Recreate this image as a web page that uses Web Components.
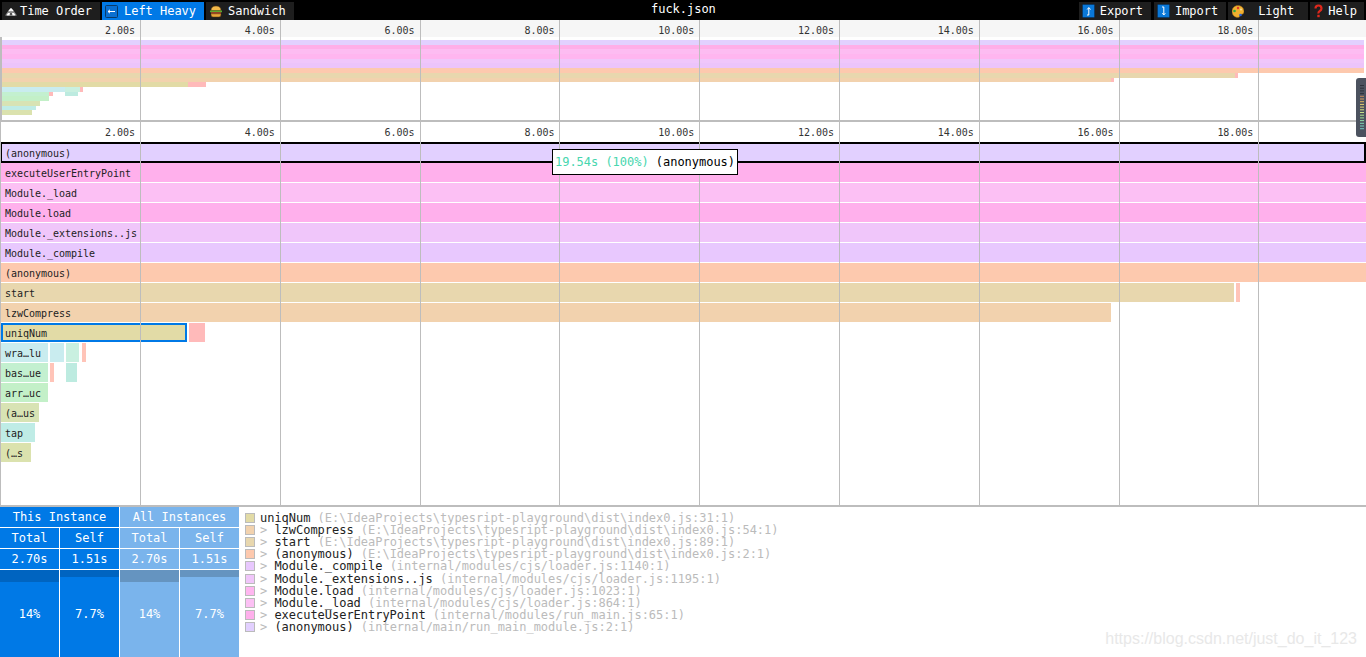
<!DOCTYPE html>
<html>
<head>
<meta charset="utf-8">
<title>fuck.json</title>
<style>
html, body { margin: 0; height: 100%; overflow: hidden; background: #fff; }
body { font: 12px "DejaVu Sans Mono", monospace; letter-spacing: -0.024px; }
</style>
</head>
<body>
<sc-app></sc-app>
<script>
const ICONS = {
    mountain: `<svg width="12" height="10" viewBox="0 0 12 10"><path d="M0 9.500L3.500 4.500 6 2l2.500 2.500L12 9.500z" fill="#8a8a8a"/><path d="M3.500 4.500L6 2l2.500 2.500L7 5.500 6 4.500 5 5.500z" fill="#fff"/><path d="M1.500 9.500L3 7h6l1.500 2.500z" fill="#fff"/><path d="M4.500 9.500L5 7h2l.5 2.500z" fill="#555"/></svg>`,
    left: `<svg width="13" height="13" viewBox="0 0 13 13"><rect x=".5" y=".5" width="12" height="12" rx="1" fill="#0a6fd0" stroke="#0a3a68"/><path d="M3 6.500h7M3 6.500l2-1.700M3 6.500l2 1.700" stroke="#fff" fill="none"/></svg>`,
    sandwich: `<svg width="12" height="13" viewBox="0 0 12 13"><path d="M1 5.500Q1 1 6 1t5 4.500z" fill="#f2b84a" stroke="#5a3a10" stroke-width=".5"/><path d="M0 5.500h12v1.800H0z" fill="#5fa82e"/><path d="M1 7.300h10v1.500H1z" fill="#c0402a"/><path d="M1 8.800h10v1q0 2.200-2 2.200H3q-2 0-2-2.200z" fill="#e9a63a" stroke="#5a3a10" stroke-width=".5"/></svg>`,
    up: `<svg width="13" height="14" viewBox="0 0 13 14"><rect x=".5" y=".5" width="12" height="13" rx="1" fill="#0a78d8" stroke="#0a3a68"/><path d="M5 11h1.800V4M6.800 3.500L5.200 5.500M6.800 3.500l1.700 2" stroke="#fff" fill="none"/></svg>`,
    down: `<svg width="13" height="14" viewBox="0 0 13 14"><rect x=".5" y=".5" width="12" height="13" rx="1" fill="#0a78d8" stroke="#0a3a68"/><path d="M5 3h1.800v7.500M6.800 11L5.400 9.200M6.800 11l1.500-1.800" stroke="#fff" fill="none"/></svg>`,
    palette: `<svg width="12" height="13" viewBox="0 0 12 13"><path d="M6 .5C2.500.5 0 3 0 6.500S2.500 12.500 6 12.500c2 0 1.500-1.500 2-2.500s4 0 4-3.500S9.500.5 6 .5z" fill="#f0b030" stroke="#8a5a14" stroke-width=".5"/><circle cx="6" cy="3" r="1.200" fill="#e03a2a"/><circle cx="2.500" cy="6" r="1.300" fill="#2fa83f"/><circle cx="9" cy="4.500" r="1" fill="#f6e0a0"/><circle cx="8.500" cy="10" r="1.300" fill="#2a62d8"/></svg>`,
    help: `<svg width="9" height="14" viewBox="0 0 9 14"><path d="M1.500 4.500Q1.500 1.500 4.500 1.500T7.500 4.500Q7.500 6 5.800 7T4.500 9.500" fill="none" stroke="#e0281c" stroke-width="2.200"/><rect x="3.300" y="10.800" width="2.400" height="2.400" fill="#e0281c"/></svg>`
}

const GRID_LABELS = ['2.00s', '4.00s', '6.00s', '8.00s', '10.00s', '12.00s', '14.00s', '16.00s', '18.00s', '']

const ROWS = [
    { c: '#e2d0ff', bars: [[0, 1366, '(anonymous)']] },
    { c: '#ffb0ec', bars: [[1, 1365, 'executeUserEntryPoint']] },
    { c: '#fcc0f4', bars: [[1, 1365, 'Module._load']] },
    { c: '#ffb0ec', bars: [[1, 1365, 'Module.load']] },
    { c: '#f0c6fa', bars: [[1, 1365, 'Module._extensions..js']] },
    { c: '#e8c8fe', bars: [[1, 1365, 'Module._compile']] },
    { c: '#fdc9ae', bars: [[1, 1365, '(anonymous)']] },
    { c: '#e8d7ae', bars: [[1, 1233, 'start'], [1236, 1, '', '#ffc4b8']] },
    { c: '#f2d2ae', bars: [[1, 1110, 'lzwCompress']] },
    { c: '#e2dba6', bars: [[1, 186, 'uniqNum'], [189, 16, '', '#ffbaba']] },
    { c: '#c9ecef', bars: [[1, 47, 'wra…lu'], [50, 14, ''], [66, 13, '', '#c9f0e0'], [82, 1, '', '#ffc4b8']] },
    { c: '#c3f0d0', bars: [[1, 47, 'bas…ue'], [50, 2, '', '#ffc4b8'], [66, 11, '', '#bdebe0']] },
    { c: '#c3f0c8', bars: [[1, 47, 'arr…uc']] },
    { c: '#d8e3b4', bars: [[1, 38, '(a…us']] },
    { c: '#bfece6', bars: [[1, 34, 'tap']] },
    { c: '#dbe2ae', bars: [[1, 30, '(…s']] }
]

const MINI_ROWS = [
    [[2, 1362, '#e2d0ff']], [[2, 1362, '#ffaee8']], [[2, 1362, '#fdbcf2']], [[2, 1362, '#ffb6f0']],
    [[2, 1362, '#f0c6fa']], [[2, 1362, '#ecc4fa']], [[2, 1362, '#fdc9ae']],
    [[2, 1233, '#e8d7ae'], [1235, 3, '#ffbaba']],
    [[2, 1109, '#f2d2ae'], [1111, 3, '#ffbaba']],
    [[2, 186, '#e2dba6'], [188, 18, '#ffbaba']],
    [[2, 63, '#c9ecef'], [65, 15, '#c9f0e0'], [80, 3, '#ffbaba']],
    [[2, 47, '#c3f0d0'], [49, 4, '#ffbaba'], [65, 13, '#bdebe0']],
    [[2, 47, '#c3f0c8']], [[2, 38, '#d8e3b4']], [[2, 34, '#bfece6']], [[2, 30, '#dbe2ae']]
]

const FILE_A = 'E:\\IdeaProjects\\typesript-playground\\dist\\index0.js'
const STACK = [
    ['#e2dba6', 'uniqNum', `(${FILE_A}:31:1)`],
    ['#f2d2ae', 'lzwCompress', `(${FILE_A}:54:1)`],
    ['#e8d7ae', 'start', `(${FILE_A}:89:1)`],
    ['#fdc9ae', '(anonymous)', `(${FILE_A}:2:1)`],
    ['#e8c8fe', 'Module._compile', '(internal/modules/cjs/loader.js:1140:1)'],
    ['#f0c6fa', 'Module._extensions..js', '(internal/modules/cjs/loader.js:1195:1)'],
    ['#ffb6f0', 'Module.load', '(internal/modules/cjs/loader.js:1023:1)'],
    ['#fcc0f4', 'Module._load', '(internal/modules/cjs/loader.js:864:1)'],
    ['#ffb0ec', 'executeUserEntryPoint', '(internal/modules/run_main.js:65:1)'],
    ['#e2d0ff', '(anonymous)', '(internal/main/run_main_module.js:2:1)']
]

class ScTab extends HTMLElement {
    constructor() {
        super();
        this._shadowDOM = this.attachShadow({ mode: 'open' });
        this._shadowDOM.innerHTML = `
        <style>
        :host { display: flex; align-items: center; height: 18px; padding: 0 var(--right, 8px) 0 var(--left, 3px); background: #1e1e1e; color: #fff; white-space: nowrap; }
        :host([active]) { background: #0079e6; }
        .icon { display: flex; margin-right: var(--gap, 5px); }
        </style>
        <span class="icon">${ICONS[this.getAttribute('icon')]}</span><slot></slot>
        `
    }
}
window.customElements.define('sc-tab', ScTab)

class ScToolbar extends HTMLElement {
    constructor() {
        super();
        this.attachShadow({ mode: 'open' }).innerHTML = `
        <style>
        :host { display: flex; align-items: flex-end; justify-content: space-between; height: 20px; background: #000; color: #fff; position: relative; padding: 0 2px; }
        .side { display: flex; gap: 2px; }
        .title { position: absolute; left: 651px; top: 2px; line-height: 14px; }
        </style>
        <div class="side"><slot name="left"></slot></div>
        <div class="title"><slot name="title"></slot></div>
        <div class="side"><slot name="right"></slot></div>
        `
    }
}
window.customElements.define('sc-toolbar', ScToolbar)

// vertical time grid, lies over the bars of a chart
class ScGrid extends HTMLElement {
    constructor() {
        super();
        const cells = GRID_LABELS.map(t => `<div class="cell">${t}</div>`).join('');
        this.attachShadow({ mode: 'open' }).innerHTML = `
        <style>
        :host { position: absolute; inset: 0; display: flex; padding-left: 1.2px; pointer-events: none; font-size: 10px; color: #333; }
        .cell { flex: none; box-sizing: border-box; width: 139.8px; height: 100%; border-right: 1px solid #bdbdbd; text-align: right; padding: 5px 5px 0 0; line-height: 12px; }
        .cell:last-child { border-right: 0; }
        </style>
        ${cells}
        `
    }
}
window.customElements.define('sc-grid', ScGrid)

class ScMinimap extends HTMLElement {
    constructor() {
        super();
        const rows = MINI_ROWS.map(bars => `<div class="row">${bars.map(b =>
            `<i style="left:${b[0]}px;width:${b[1]}px;background:${b[2]}"></i>`).join('')}</div>`).join('');
        this.attachShadow({ mode: 'open' }).innerHTML = `
        <style>
        :host { display: block; position: relative; height: 100px; border-bottom: 2px solid #bdbdbd; overflow: hidden; }
        .ruler { height: 17px; margin-bottom: 3px; background: #f6f6f6; }
        .row { position: relative; height: 4.7px; }
        .row i { position: absolute; top: 0; bottom: 0; }
        .edge { position: absolute; left: 0; top: 17px; bottom: 0; width: 2px; background: #bdbdbd; }
        </style>
        <div class="ruler"></div>
        ${rows}
        <sc-grid></sc-grid>
        <div class="edge"></div>
        `
    }
}
window.customElements.define('sc-minimap', ScMinimap)

class ScFrame extends HTMLElement {
    constructor() {
        super();
        this.attachShadow({ mode: 'open' }).innerHTML = `
        <style>
        :host { position: absolute; top: 0; height: 18.5px; box-sizing: border-box; padding: 5px 0 0 4px; font-size: 10px; line-height: 12px; color: #222; overflow: hidden; white-space: nowrap; }
        :host([selected]) { outline: 2px solid #0079e6; outline-offset: -2px; }
        :host([hovered]) { top: -1px; height: 21px; padding: 6px 0 0 5px; box-shadow: inset 0 0 0 2px #000; }
        </style>
        <slot></slot>
        `
    }
}
window.customElements.define('sc-frame', ScFrame)

class ScFlamechart extends HTMLElement {
    constructor() {
        super();
        const rows = ROWS.map((row, d) => {
            const bars = row.bars.map(b => {
                let flags = '';
                if (b[2] === 'uniqNum') flags = 'selected';
                if (d === 0) flags = 'hovered';
                return `<sc-frame ${flags} style="left:${b[0]}px;width:${b[1]}px;background:${b[3] || row.c}">${b[2]}</sc-frame>`
            }).join('');
            return `<div class="row">${bars}</div>`
        }).join('');
        this.attachShadow({ mode: 'open' }).innerHTML = `
        <style>
        :host { display: block; position: relative; flex: 1; min-height: 0; overflow: hidden; }
        .ruler { height: 21px; }
        .row { position: relative; height: 20px; }
        .edge { position: absolute; left: 0; top: 0; bottom: 0; width: 1px; background: #bdbdbd; }
        </style>
        <div class="ruler"></div>
        ${rows}
        <div class="edge"></div>
        <sc-grid></sc-grid>
        <slot></slot>
        `
    }
}
window.customElements.define('sc-flamechart', ScFlamechart)

class ScTooltip extends HTMLElement {
    constructor() {
        super();
        this.attachShadow({ mode: 'open' }).innerHTML = `
        <style>
        :host { position: absolute; left: 552px; top: 27px; box-sizing: border-box; height: 26px; padding: 0 2px; line-height: 25px; background: #fff; border: 1px solid #000; color: #000; white-space: nowrap; }
        .time { color: #47d6ae; }
        </style>
        <span class="time"><slot name="time"></slot></span> <slot></slot>
        `
    }
}
window.customElements.define('sc-tooltip', ScTooltip)

class ScStats extends HTMLElement {
    constructor() {
        super();
        const col = (label, value, pct, cover, dim) => `
            <div class="cell ${dim}">${label}</div>
            <div class="cell ${dim}">${value}</div>
            <div class="bar ${dim}"><div class="fill" style="height:${cover}px"></div><div class="pct">${pct}</div></div>`
        this.attachShadow({ mode: 'open' }).innerHTML = `
        <style>
        :host { display: block; width: 239px; flex: none; color: #fff; }
        .wrap { display: flex; flex-direction: column; gap: 1px; }
        .heads { display: grid; grid-template-columns: 119px 119px; column-gap: 1px; }
        .table { display: grid; grid-template-columns: 59px 59px 59px 59px; grid-template-rows: 20px 20px 87px; grid-auto-flow: column; gap: 1px; }
        .cell { background: #0079e6; text-align: center; line-height: 20px; }
        .dim { background: #7ab4ec; }
        .bar { position: relative; background: #0079e6; }
        .bar.dim { background: #7ab4ec; }
        .fill { background: #0064c0; }
        .bar.dim .fill { background: #6594c0; }
        .pct { position: absolute; inset: 0; display: flex; align-items: center; justify-content: center; }
        </style>
        <div class="wrap">
            <div class="heads"><div class="cell">This Instance</div><div class="cell dim">All Instances</div></div>
            <div class="table">
                ${col('Total', '2.70s', '14%', 12, '')}
                ${col('Self', '1.51s', '7.7%', 7, '')}
                ${col('Total', '2.70s', '14%', 12, 'dim')}
                ${col('Self', '1.51s', '7.7%', 7, 'dim')}
            </div>
        </div>
        `
    }
}
window.customElements.define('sc-stats', ScStats)

class ScStackLine extends HTMLElement {
    constructor() {
        super();
        const arrow = this.hasAttribute('nested') ? '&gt; ' : '';
        this.attachShadow({ mode: 'open' }).innerHTML = `
        <style>
        :host { display: flex; align-items: center; height: 12.2px; color: #222; }
        .swatch { flex: none; box-sizing: border-box; width: 10px; height: 10px; margin-right: 5px; background: var(--swatch); border: 1px solid #bbb; }
        .text { white-space: pre; }
        .arrow, .file { color: #bbb; }
        </style>
        <span class="swatch"></span>
        <span class="text"><span class="arrow">${arrow}</span><slot></slot> <span class="file"><slot name="file"></slot></span></span>
        `
    }
}
window.customElements.define('sc-stack-line', ScStackLine)

class ScDetail extends HTMLElement {
    constructor() {
        super();
        this.attachShadow({ mode: 'open' }).innerHTML = `
        <style>
        :host { display: flex; flex: none; height: 150px; border-top: 2px solid #bdbdbd; }
        .stack { padding: 4.5px 0 0 6px; line-height: 12px; }
        </style>
        <sc-stats></sc-stats>
        <div class="stack"><slot></slot></div>
        `
    }
}
window.customElements.define('sc-detail', ScDetail)

class ScHandle extends HTMLElement {
    constructor() {
        super();
        const colors = ['#2e323b', '#2e323b', '#2e323b', '#2e323b', '#c98a58', '#d9a060', '#e0b860', '#e6d070', '#e6d878', '#d8e080', '#c8e088', '#b0e090', '#a0e098', '#90dca8', '#80d8b8', '#74d0c0', '#70c8c0'];
        const lines = colors.map((c, i) => `<rect x="4" y="${7 + i * 2.7}" width="4" height="1" fill="${c}"/>`).join('');
        this.attachShadow({ mode: 'open' }).innerHTML = `
        <style>
        :host { position: absolute; right: 0; top: 78px; width: 10px; height: 59px; z-index: 2; }
        svg { display: block; }
        </style>
        <svg width="10" height="59" viewBox="0 0 10 59"><path d="M3 0H10V59H3Q0 59 0 56V3Q0 0 3 0z" fill="#4c525f"/>${lines}</svg>
        `
    }
}
window.customElements.define('sc-handle', ScHandle)

class ScApp extends HTMLElement {
    constructor() {
        super();
        const lines = STACK.map((s, i) =>
            `<sc-stack-line ${i ? 'nested' : ''} style="--swatch:${s[0]}">${s[1]}<span slot="file">${s[2]}</span></sc-stack-line>`).join('');
        this.attachShadow({ mode: 'open' }).innerHTML = `
        <style>
        :host { display: flex; flex-direction: column; position: relative; height: 657px; overflow: hidden; }
        .mark { position: absolute; right: 9px; bottom: 9px; font: 16px "Liberation Sans", sans-serif; letter-spacing: 0; color: #e8e8e8; }
        </style>
        <sc-toolbar>
            <sc-tab slot="left" icon="mountain" style="--gap:3px">Time Order</sc-tab>
            <sc-tab slot="left" icon="left" active style="--gap:6px">Left Heavy</sc-tab>
            <sc-tab slot="left" icon="sandwich" style="--left:4px;--gap:6px">Sandwich</sc-tab>
            <span slot="title">fuck.json</span>
            <sc-tab slot="right" icon="up" style="margin-right:1px">Export</sc-tab>
            <sc-tab slot="right" icon="down">Import</sc-tab>
            <sc-tab slot="right" icon="palette" style="--left:4px;--gap:14px;--right:14px">Light</sc-tab>
            <sc-tab slot="right" icon="help" style="--left:4px;--right:7px">Help</sc-tab>
        </sc-toolbar>
        <sc-minimap></sc-minimap>
        <sc-flamechart>
            <sc-tooltip><span slot="time">19.54s (100%)</span>(anonymous)</sc-tooltip>
        </sc-flamechart>
        <sc-detail>${lines}</sc-detail>
        <sc-handle></sc-handle>
        <div class="mark">https://blog.csdn.net/just_do_it_123</div>
        `
    }
}
window.customElements.define('sc-app', ScApp)
</script>
</body>
</html>
